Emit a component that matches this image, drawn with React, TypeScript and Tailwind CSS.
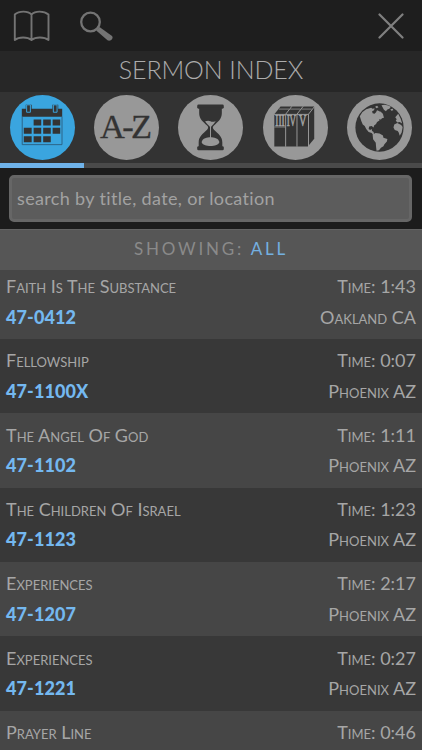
import React from 'react';

interface Sermon {
  title: string;
  code: string;
  time: string;
  place: string;
}

const sermons: Sermon[] = [
  { title: 'Faith Is The Substance', code: '47-0412', time: '1:43', place: 'Oakland CA' },
  { title: 'Fellowship', code: '47-1100X', time: '0:07', place: 'Phoenix AZ' },
  { title: 'The Angel Of God', code: '47-1102', time: '1:11', place: 'Phoenix AZ' },
  { title: 'The Children Of Israel', code: '47-1123', time: '1:23', place: 'Phoenix AZ' },
  { title: 'Experiences', code: '47-1207', time: '2:17', place: 'Phoenix AZ' },
  { title: 'Experiences', code: '47-1221', time: '0:27', place: 'Phoenix AZ' },
  { title: 'Prayer Line', code: '', time: '0:46', place: '' },
];

const CalendarIcon = () => (
  <svg viewBox="0 0 66 66" className="size-full">
    <g fill="#333333">
      <path d="M12 14h4v-4h6v4h21v-4h6v4h4v8H12z" />
      <path d="M24 25h7.7v6H24zM33.7 25h7.7v6h-7.7zM43.3 25H51v6h-7.7zM14 33.3h8v6h-8zM24 33.3h7.7v6H24zM33.7 33.3h7.7v6h-7.7zM43.3 33.3H51v6h-7.7zM14 42h8v6h-8zM24 42h7.7v6H24zM33.7 42h7.7v6h-7.7z" />
    </g>
    <path d="M12.4 22v28.4h40.4V22" fill="none" stroke="#2c6587" strokeWidth="1" />
    <path d="M16.9 10h3.8v7.500h-3.8zM44 10h3.8v7.500H44z" fill="#333333" stroke="#3aa5df" strokeWidth="1" />
  </svg>
);

const AlphaIcon = () => (
  <svg viewBox="0 0 66 66" className="size-full">
    <text x="6" y="43.5" fontFamily="'Liberation Serif', serif" fontSize="35" textLength="53" fill="#333333" stroke="#333333" strokeWidth="0.3">A-Z</text>
  </svg>
);

const HourglassIcon = () => (
  <svg viewBox="0 0 66 66" className="size-full">
    <g fill="#333333">
      <rect x="19.5" y="9.7" width="27" height="4.2" rx="1.4" />
      <rect x="19.5" y="52" width="27" height="4.2" rx="1.4" />
      <path d="M21.500 13h23v5.500c0 6-4 8.500-8 12.500-1.500 1.500-1.500 2.700 0 4.200 4.500 4.300 8.500 6.800 8.500 12.800v5h-24v-5c0-6 4-8.500 8.500-12.800 1.500-1.500 1.500-2.700 0-4.200-4-4-8-6.500-8-12.500z" />
    </g>
    <path d="M27.500 26.700q3.500-1.300 5.500 0t5.300-.3c-1 2.200-3.300 4.200-5.300 6.600-2-2.400-4.500-4.300-5.500-6.300z" fill="#989898" />
    <path d="M33 32v12" stroke="#989898" strokeWidth="1" />
    <path d="M24 47.700c1-3.700 5.500-4.700 9-4.700s8 1 9 4.700c-.3 3-5 4-9 4s-8.700-1-9-4z" fill="#989898" />
  </svg>
);

const VolumesIcon = () => (
  <svg viewBox="0 0 66 66" className="size-full">
    <path d="M11.500 19.500L17.800 11.800H52v32.500l-6.500 8h-34z" fill="#333333" />
    <g stroke="#989898" strokeWidth="1" fill="none">
      <path d="M11 19.700h35.300M23 52.500V19.500l6.300-8M34.500 52.500V19.500l6.300-8M46.200 52.500V19.500l6.300-8" />
      <path d="M11.500 32.500h11.300" strokeWidth="0.8" />
      <path d="M16 14.300h10.500M27.500 14.300H38M39 14.300h10.500" strokeWidth="0.8" />
    </g>
    <g fontFamily="'Liberation Serif', serif" fontSize="16" fill="#a4a4a4" stroke="#a4a4a4" strokeWidth="0.6">
      <text transform="translate(12.500 31.300) scale(.6 1)">III</text>
      <text transform="translate(24 31.300) scale(.57 1)">IV</text>
      <text transform="translate(36.500 31.300) scale(.65 1)">V</text>
    </g>
  </svg>
);

const GlobeIcon = () => (
  <svg viewBox="0 0 66 66" className="size-full">
    <circle cx="33" cy="33" r="24.500" fill="#333333" />
    <g fill="#989898">
      {/* North America */}
      <path d="M13 21.500l2.500-4 4-3 5-1.500 1.500 1 2-.5-.5 2-2 1 .5 2 2 .5 1.500-1.500 1-2 2.500 1 .5 2 2 .5 1.500 2 .5 2-2 .5-1 1.500-2-.5.5 1.500-2.500 1.500-1 2-2 1.500-.5 2-2-1.500-2.500.5-.5 2.500 1.500 1 1.500-1 .5 2 1.500 1 .5 2.500 2 1.500-1.500.5-3-3.500-3-1-2.500-3-1.500-3-2-1.500-1.500-3.500z" />
      {/* Greenland and the arctic islands */}
      <path d="M35 10.500l3-.5 4 .7 2.500 1.300-1.500 2-2 .8-1.500 1.700-2-1.500zM44 14.500l2.500-.5.5 1.500-2 .5zM28.500 12l2-1 1.500 1.500-2 1zM32 18l1.500-1.500 2.500 2 1 2-2 .5z" />
      {/* South America */}
      <path d="M26 40l3-1.500 4 .5 3.500 2 .5 2.300 4 1.500-.5 2.500-2.500 2.700-1 2-2.500 1.500-2 2.500-2.500.5-.5-4-.3-4-2.700-3.500z" />
      {/* Europe and Africa */}
      <path d="M49 22.500l3-3.500 2.500 5 1.500 5-2.500-1.500-2.500.5-1.500-2 1-1.500zM48 30l3-1.500 4 2 1.500 2-1 5.500-2 3.500-1-3.500-1-1.500-3-1-1.300-2.500z" />
    </g>
  </svg>
);

const tabs = [
  { id: 'date', icon: CalendarIcon },
  { id: 'title', icon: AlphaIcon },
  { id: 'length', icon: HourglassIcon },
  { id: 'volume', icon: VolumesIcon },
  { id: 'location', icon: GlobeIcon },
];

const App: React.FC = () => {
  const active = 'date';

  return (
    <div className="flex h-[750px] w-[422px] flex-col overflow-hidden bg-[#1c1c1c] font-[Lato,sans-serif] text-[#a6a6a6]">
      <header className="flex h-[51px] shrink-0 items-center bg-[#1e1e1e] pl-[13px] pr-[18px]">
        <button>
          <svg width="37" height="32" viewBox="0 0 37 32" fill="none" stroke="#747474" strokeWidth="1.900" strokeLinejoin="round">
            <path d="M18.500 4.500C15 .6 6 .6 1.800 4.500V30c4-3.400 12.700-3.400 16.700 0 4-3.400 12.700-3.400 17 0V4.500C31 .6 22 .6 18.500 4.500zV30" />
          </svg>
        </button>
        <button className="ml-[29px]">
          <svg width="36" height="32" viewBox="0 0 36 32" fill="none" stroke="#747474">
            <circle cx="11.500" cy="12" r="9.300" strokeWidth="2.300" />
            <path d="M17.200 20.400l3.300-3.400L33 26c2 2.200-1.500 6-4.500 4.300z" fill="#747474" stroke="none" />
          </svg>
        </button>
        <button className="ml-auto">
          <svg width="26" height="26" viewBox="0 0 26 26" stroke="#808080" strokeWidth="2.200" strokeLinecap="round">
            <path d="M1.500 1.500l23 23M24.500 1.500l-23 23" />
          </svg>
        </button>
      </header>

      <h1 className="flex h-[41px] shrink-0 items-center justify-center bg-[#272727] pb-[3px] text-[25px] font-light tracking-[-0.100px] text-[#acacac]">
        SERMON INDEX
      </h1>

      {/* Sort tabs */}
      <nav className="grid h-[76px] shrink-0 grid-cols-5 bg-[#333333]">
        {tabs.map((tab) => (
          <button
            key={tab.id}
            className={`flex justify-center border-b-[5px] pt-[3px] ${tab.id === active ? 'border-[#6fb3ea]' : 'border-[#4a4a4a]'}`}
          >
            <span className={`size-[65px] rounded-full ${tab.id === active ? 'bg-[#3aa5df]' : 'bg-[#989898]'}`}>
              <tab.icon />
            </span>
          </button>
        ))}
      </nav>

      <div className="h-[61px] shrink-0 pl-[9px] pr-[10px] pt-[7px]">
        <input
          placeholder="search by title, date, or location"
          className="h-[47px] w-full rounded-[5px] border-[3px] border-[#666666] bg-[#5c5c5c] px-[5px] pb-0.5 text-[18px] tracking-[0.350px] placeholder:text-[#a2a2a2]"
        />
      </div>

      <div className="flex h-[41px] shrink-0 items-center justify-center border-t border-[#636363] bg-[#565656] pb-0.5 text-[17px] tracking-[2.800px] text-[#8a8a8a]">
        <p>SHOWING: <span className="text-[#74b0e0]">ALL</span></p>
      </div>

      <ul className="-mt-[5.300px]">
        {sermons.map((s, i) => (
          <li
            key={i}
            className={`flex h-[74.340px] justify-between px-1.5 pt-[6.300px] text-[18px] leading-[30.500px] ${i % 2 ? 'bg-[#383838]' : 'bg-[#464646]'} ${i === 0 ? '[clip-path:inset(5.300px_0_0_0)]' : ''}`}
          >
            <div>
              <p className="[font-variant-caps:small-caps]">{s.title}</p>
              <p className="font-black tracking-[0.100px] text-[#74b8f0]">{s.code}</p>
            </div>
            <div className="text-right [font-variant-caps:small-caps]">
              <p>Time: {s.time}</p>
              <p>{s.place}</p>
            </div>
          </li>
        ))}
      </ul>
    </div>
  );
};

export default App;
